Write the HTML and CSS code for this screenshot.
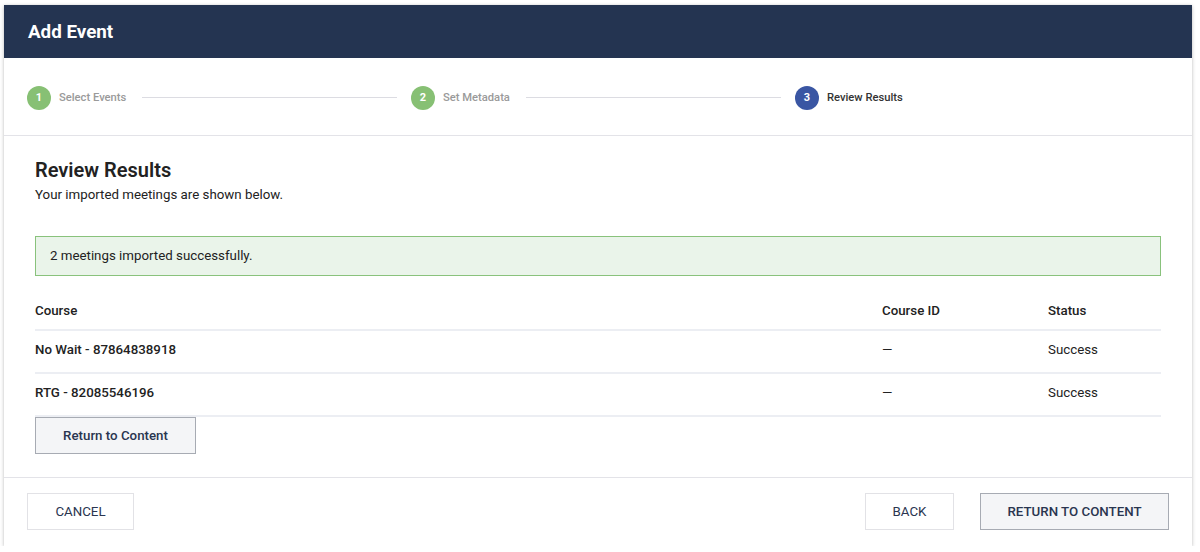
FILE: index.html
```html
<!DOCTYPE html>
<html>
<head>
<meta charset="utf-8">
<link rel="stylesheet" href="styles.css">
</head>
<body>
<div class="modal">
  <div class="modal-header">Add Event</div>
  <div class="stepper">
    <div class="step done"><span class="num">1</span><span class="label">Select Events</span><span class="line"></span></div>
    <div class="step done"><span class="num">2</span><span class="label">Set Metadata</span><span class="line"></span></div>
    <div class="step active"><span class="num">3</span><span class="label">Review Results</span></div>
  </div>
  <div class="content">
    <h2 class="title">Review Results</h2>
    <p class="subtitle">Your imported meetings are shown below.</p>
    <div class="alert">2 meetings imported successfully.</div>
    <table class="results">
      <thead>
        <tr><th class="c-course">Course</th><th class="c-id">Course ID</th><th class="c-status">Status</th></tr>
      </thead>
      <tbody>
        <tr><td class="c-course name">No Wait - 87864838918</td><td class="c-id">—</td><td class="c-status">Success</td></tr>
        <tr><td class="c-course name">RTG - 82085546196</td><td class="c-id">—</td><td class="c-status">Success</td></tr>
      </tbody>
    </table>
    <button class="btn btn-secondary btn-return">Return to Content</button>
  </div>
  <div class="footer">
    <button class="btn btn-plain btn-cancel">CANCEL</button>
    <div class="footer-right">
      <button class="btn btn-plain btn-back">BACK</button>
      <button class="btn btn-secondary btn-return-upper">RETURN TO CONTENT</button>
    </div>
  </div>
</div>
</body>
</html>
```

FILE: styles.css
```css
* { box-sizing: border-box; }
html, body { margin: 0; padding: 0; background: #ffffff; }
body {
  font-family: Roboto, "Liberation Sans", Arial, sans-serif;
  color: #222;
  font-size: 13.3px;
}
.modal {
  width: 1188px;
  margin: 5px 0 0 4px;
  background: #fff;
  box-shadow: 0 1px 4px rgba(0,0,0,0.22), 0 0 2px rgba(0,0,0,0.08);
}
.modal-header {
  height: 53px;
  background: #243451;
  color: #fff;
  font-size: 18.8px;
  font-weight: 700;
  line-height: 54px;
  padding-left: 24px;
}
.stepper {
  display: flex;
  align-items: center;
  height: 78px;
  padding: 2px 13px 0 23px;
  border-bottom: 1px solid #e3e3e8;
}
.step {
  flex: 1;
  display: flex;
  align-items: center;
}
.num {
  width: 24px;
  height: 24px;
  border-radius: 50%;
  color: #fff;
  font-size: 11px;
  font-weight: 700;
  display: flex;
  align-items: center;
  justify-content: center;
  flex: none;
}
.step.done .num { background: #87c074; }
.step.active .num { background: #3a56a3; }
.label {
  margin-left: 8px;
  font-size: 11.2px;
  font-weight: 500;
  color: #9a9a9a;
}
.step.active .label { color: #333; }
.line {
  flex: 1;
  height: 1px;
  background: #dcdce2;
  margin: 0 14px 0 16px;
}
.content {
  padding: 22px 31px 23px 31px;
}
.title {
  margin: 0;
  font-size: 20px;
  font-weight: 600;
  line-height: 24px;
  color: #222;
}
.subtitle {
  margin: 4px 0 0 0;
  font-size: 13.3px;
  line-height: 18px;
  color: #222;
}
.alert {
  margin-top: 32px;
  height: 40px;
  background: #eaf4ea;
  border: 1px solid #89c27c;
  padding: 0 14px;
  line-height: 38px;
  font-size: 13.3px;
  color: #222;
}
.results {
  width: 100%;
  border-collapse: collapse;
  margin-top: 14px;
}
.results th, .results td {
  text-align: left;
  padding: 0;
  font-size: 13.3px;
  line-height: 18px;
  border-bottom: 2px solid #eceef3;
}
.results th {
  font-weight: 500;
  height: 40px;
  padding-top: 2px;
  vertical-align: middle;
}
.results td {
  height: 43px;
  padding-top: 10px;
  padding-bottom: 13px;
  vertical-align: top;
}
.results td.name { font-weight: 500; }
.c-course { width: 847px; }
.c-id { width: 166px; }
.btn {
  font-family: Roboto, "Liberation Sans", Arial, sans-serif;
  font-size: 13.3px;
  color: #2a3550;
  cursor: pointer;
  border-radius: 0;
}
.btn-secondary {
  background: #f4f5f7;
  border: 1px solid #a7abb3;
  font-weight: 500;
}
.btn-plain {
  background: #fff;
  border: 1px solid #e2e2e6;
  font-weight: 400;
}
.btn-return {
  display: block;
  width: 161px;
  height: 37px;
  margin-top: 0;
}
.footer {
  border-top: 1px solid #e3e3e8;
  display: flex;
  justify-content: space-between;
  align-items: center;
  padding: 15px 23px 16px 23px;
}
.footer .btn { height: 37px; }
.btn-cancel { width: 107px; }
.footer-right { display: flex; gap: 26px; }
.btn-back { width: 89px; }
.btn-return-upper { width: 189px; }
```
